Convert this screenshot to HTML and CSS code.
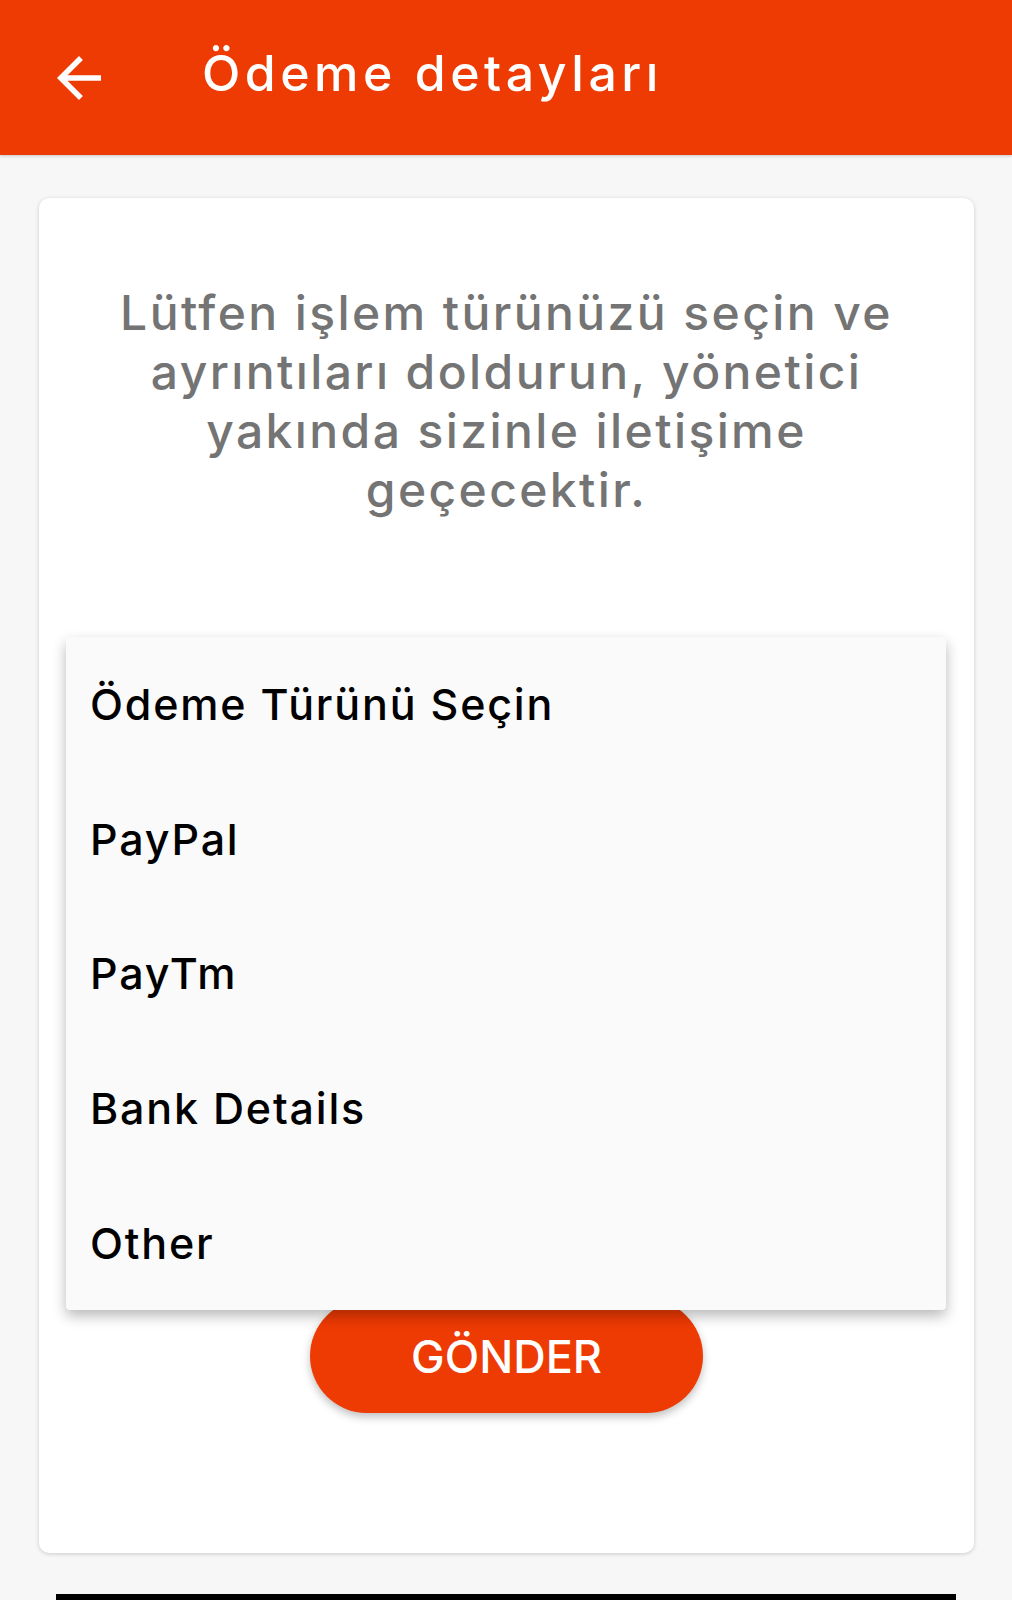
FILE: index.html
```html
<!DOCTYPE html>
<html lang="tr">

<head>
    <meta charset="UTF-8">
    <meta name="viewport" content="width=device-width, initial-scale=1.0">
    <title>Ödeme detayları</title>
    <link rel="stylesheet" href="styles.css">
</head>

<body>
    <div class="top_bar">
        <svg class="back_icon" viewBox="0 0 24 24" width="66" height="66">
            <path d="M20 11H7.83l5.59-5.59L12 4l-8 8 8 8 1.41-1.41L7.83 13H20v-2z" fill="#fff" />
        </svg>
        <h1>Ödeme detayları</h1>
    </div>

    <div class="main_container">
        <div class="payment_card">
            <p class="info_text">Lütfen işlem türünüzü seçin ve ayrıntıları doldurun, yönetici yakında sizinle iletişime geçecektir.</p>

            <button class="send_button">GÖNDER</button>

            <!-- open spinner popup -->
            <ul class="dropdown_menu">
                <li>Ödeme Türünü Seçin</li>
                <li>PayPal</li>
                <li>PayTm</li>
                <li>Bank Details</li>
                <li>Other</li>
            </ul>
        </div>
    </div>

    <div class="bottom_bar"></div>
</body>

</html>
```

FILE: styles.css
```css
* {
    margin: 0;
    padding: 0;
    box-sizing: border-box;
}

body {
    background-color: #f7f7f7;
    font-family: Inter, "Open Sans", sans-serif;
}

.top_bar {
    background-color: #ee3a03;
    height: 155px;
    display: flex;
    align-items: center;
    padding-left: 46px;
    box-shadow: 0 1px 3px rgba(0, 0, 0, 0.2);
}

.back_icon {
    display: block;
    flex-shrink: 0;
}

.top_bar h1 {
    color: white;
    font-size: 50px;
    font-weight: 500;
    letter-spacing: 4.5px;
    margin-left: 90px;
    margin-bottom: 10px;
}

.main_container {
    padding: 43px 38px 0 39px;
}

.payment_card {
    position: relative;
    display: flex;
    flex-direction: column;
    background-color: white;
    border-radius: 10px;
    height: 1355px;
    padding: 85px 62px 140px;
    box-shadow: 0 1px 4px rgba(0, 0, 0, 0.18);
}

.info_text {
    color: #747474;
    font-size: 48px;
    line-height: 59px;
    letter-spacing: 2.4px;
    text-align: center;
    font-weight: 500;
}

.send_button {
    display: block;
    width: 393px;
    height: 114px;
    margin: auto auto 0;
    border: none;
    border-radius: 57px;
    background-color: #ee3a03;
    color: white;
    font-family: Inter, "Open Sans", sans-serif;
    font-size: 45px;
    font-weight: 500;
    box-shadow: 0 4px 8px rgba(0, 0, 0, 0.25);
}

/* spinner popup list */
.dropdown_menu {
    position: absolute;
    top: 439px;
    left: 27px;
    width: 880px;
    list-style: none;
    background-color: #fafafa;
    border-radius: 4px;
    box-shadow: 0 6px 14px rgba(0, 0, 0, 0.28);
}

.dropdown_menu li {
    height: 134.6px;
    display: flex;
    align-items: center;
    padding-left: 24px;
    color: black;
    font-size: 43px;
    font-weight: 500;
    letter-spacing: 1.8px;
}

.bottom_bar {
    height: 20px;
    margin: 41px 56px 0;
    background-color: black;
}
```
